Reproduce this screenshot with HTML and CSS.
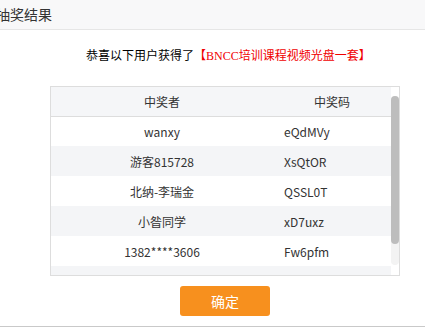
FILE: index.html
```html
<html>
	<head>
		<meta charset="utf-8" />
		<title>抽奖结果</title>
		<link rel="stylesheet" href="styles.css">
	</head>
	<body>
		<div class="dialog">
			<div class="dialog-title">抽奖结果</div>

			<div class="congrats">恭喜以下用户获得了<span class="prize">【BNCC培训课程视频光盘一套】</span></div>

			<div class="board">
				<div class="board-list">
					<table class="winners">
						<thead>
							<tr><th class="col-name">中奖者</th><th class="col-code">中奖码</th></tr>
						</thead>
						<tbody>
							<tr><td class="col-name">wanxy</td><td class="col-code">eQdMVy</td></tr>
							<tr><td class="col-name">游客815728</td><td class="col-code">XsQtOR</td></tr>
							<tr><td class="col-name">北纳-李瑞金</td><td class="col-code">QSSL0T</td></tr>
							<tr><td class="col-name">小昝同学</td><td class="col-code">xD7uxz</td></tr>
							<tr><td class="col-name">1382****3606</td><td class="col-code">Fw6pfm</td></tr>
							<tr><td class="col-name"></td><td class="col-code"></td></tr>
						</tbody>
					</table>
				</div>
				<!-- 滚动条，自己画一个 -->
				<div class="board-rail">
					<div class="rail-track">
						<div class="rail-thumb"></div>
					</div>
				</div>
			</div>

			<div class="actions">
				<div class="btn-ok">确定</div>
			</div>
		</div>
	</body>
</html>
```

FILE: styles.css
```css
body{
	margin: 0;
	background-color: #ffffff;
	font-family: "Noto Sans CJK SC", "Noto Sans", sans-serif;
	color: #333333;
}
.dialog{
	width: 425px;
	height: 326px;
	border-bottom: 1px solid #c9c9c9;
	overflow: hidden;
}
.dialog-title{
	height: 29px;
	line-height: 29px;
	font-size: 14px;
	text-indent: -4px;
	color: #333333;
	background-color: #f8f8f9;
	border-bottom: 1px solid #e6e6e6;
	overflow: hidden;
}
.congrats{
	margin-top: 15px;
	padding-left: 86px;
	height: 20px;
	line-height: 20px;
	font-size: 12px;
	color: #000000;
	white-space: nowrap;
}
.congrats .prize{
	color: #f00000;
	font-family: "Liberation Serif", "Noto Sans CJK SC", serif;
}
.board{
	display: flex;
	width: 348px;
	height: 188px;
	margin-top: 21px;
	margin-left: 50px;
	border: 1px solid #dddddd;
}
.board-list{
	width: 340px;
	height: 188px;
	overflow: hidden;
}
.winners{
	width: 340px;
	border-collapse: collapse;
	table-layout: fixed;
	font-size: 12px;
}
.winners th{
	height: 29px;
	font-weight: normal;
	color: #333333;
	background-color: #f5f6f8;
	border-bottom: 1px solid #dddddd;
	padding: 0;
}
.winners td{
	height: 30px;
	padding: 0;
	color: #333333;
}
.winners tbody tr:nth-child(even) td{
	background-color: #f4f5f7;
}
.winners .col-name{
	width: 222px;
	text-align: center;
}
.winners th.col-code{
	text-align: center;
}
.winners td.col-code{
	text-align: left;
	padding-left: 11px;
}
.board-rail{
	width: 8px;
	padding-top: 9px;
}
.rail-track{
	height: 169px;
	border-radius: 4px;
	background-color: #f3f3f3;
}
.rail-thumb{
	height: 148px;
	border-radius: 4px;
	background-color: #bdbdbd;
}
.actions{
	margin-top: 10px;
	padding-left: 180px;
}
.btn-ok{
	width: 90px;
	height: 30px;
	line-height: 30px;
	text-align: center;
	font-size: 14px;
	color: #ffffff;
	background-color: #f7901e;
	border-radius: 3px;
}
```
